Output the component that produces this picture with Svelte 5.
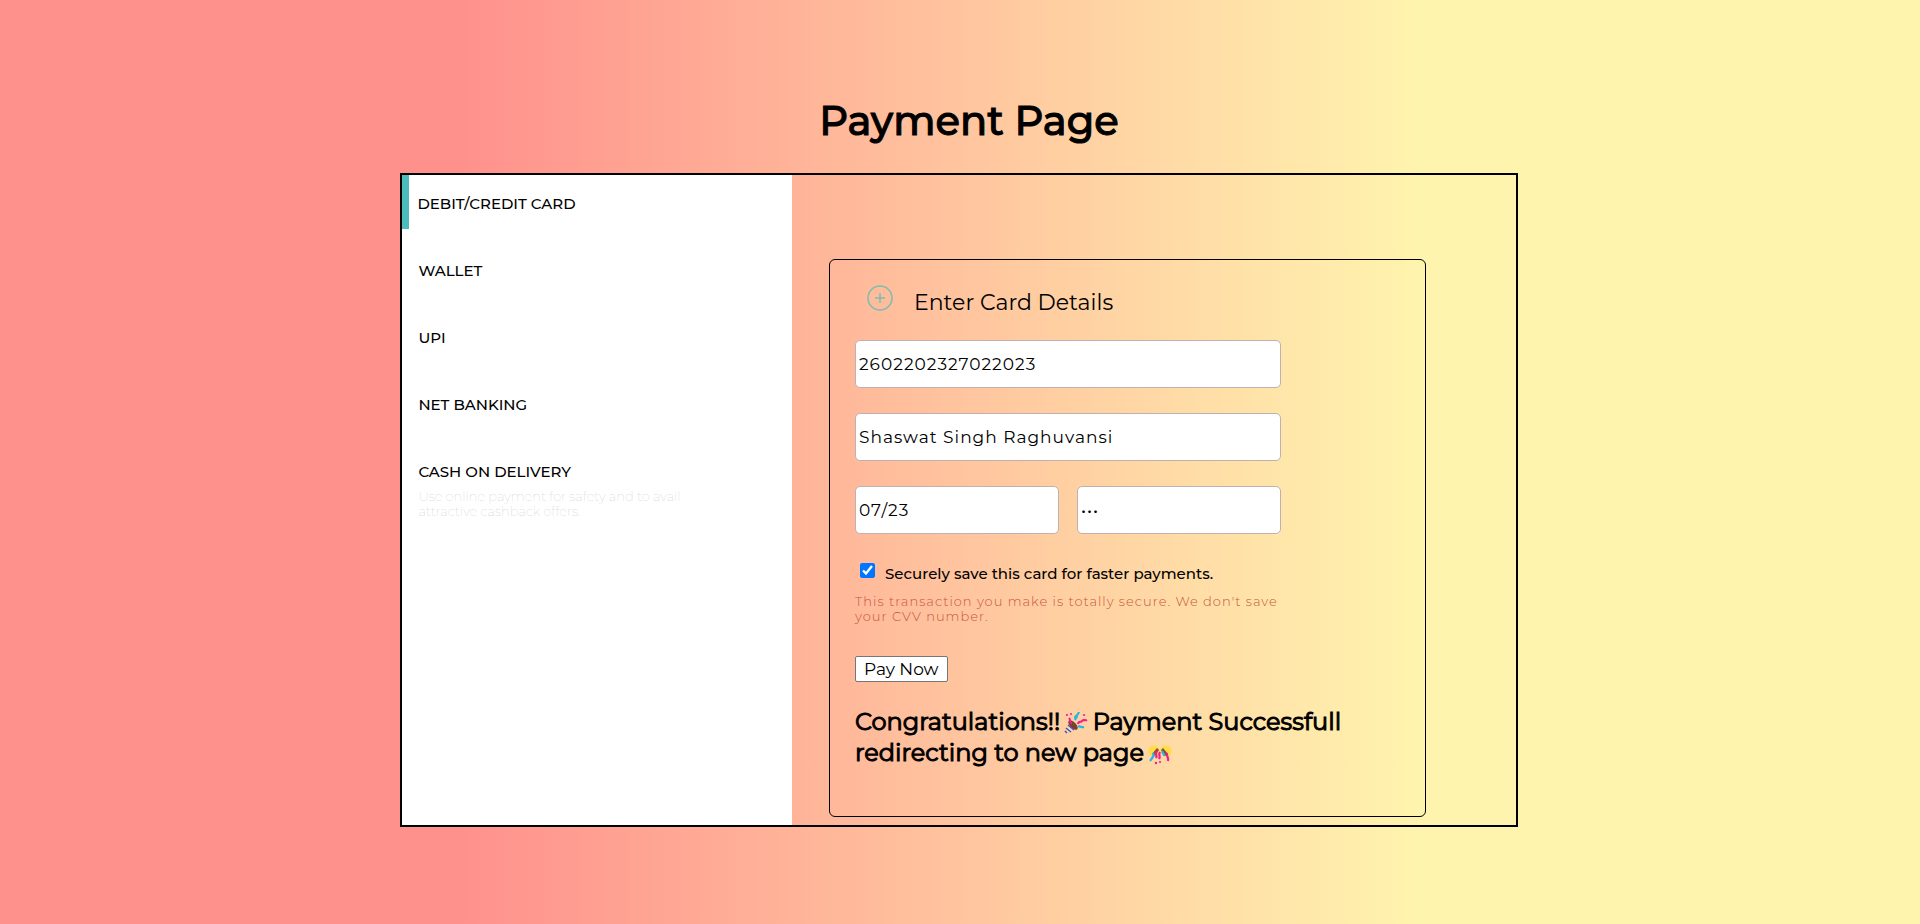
<script>
  const methods = ['Debit/Credit Card', 'Wallet', 'UPI', 'Net Banking', 'Cash on Delivery'];
  let selected = $state(0);
  let cardNumber = $state('2602202327022023');
  let holder = $state('Shaswat Singh Raghuvansi');
  let expiry = $state('07/23');
  let cvv = $state('123');
  let save = $state(true);
</script>

<main class="page">
  <h1>Payment Page</h1>

  <div class="shell">
    <nav class="methods" aria-label="Payment methods">
      {#each methods as method, i}
        <button type="button" class="method" class:active={selected === i} onclick={() => (selected = i)}>
          {method}
        </button>
      {/each}
      <p class="hint">Use online payment for safety and to avail attractive cashback offers.</p>
    </nav>

    <section class="content">
      <form class="card" onsubmit={(e) => e.preventDefault()}>
        <header class="card-head">
          <svg class="plus" viewBox="0 0 26 26" fill="none" stroke="#7dbcb0" aria-hidden="true">
            <circle cx="13" cy="13" r="12" stroke-width="1.5" />
            <path d="M13 8v10M8 13h10" stroke-width="1.5" />
          </svg>
          <h2>Enter Card Details</h2>
        </header>

        <div class="fields">
          <input type="text" aria-label="Card number" bind:value={cardNumber} />
          <input type="text" aria-label="Name on card" bind:value={holder} />
          <div class="pair">
            <input type="text" aria-label="Expiry date" bind:value={expiry} />
            <input type="password" aria-label="CVV" bind:value={cvv} />
          </div>
        </div>

        <div class="save">
          <input id="save-card" type="checkbox" bind:checked={save} />
          <label for="save-card">Securely save this card for faster payments.</label>
        </div>
        <p class="secure">This transaction you make is totally secure. We don't save your CVV number.</p>

        <button type="submit" class="pay">Pay Now</button>

        <p class="success">
          Congratulations!!
          <svg class="emoji" viewBox="0 0 24 24" fill="none" aria-hidden="true">
            <path d="M6 12 11 18 2 22Z" fill="#f4dfc4" />
            <path d="M4 14l6 5M2 17l5 4M1 20l2 2" stroke="#4b55b8" stroke-width="1.6" />
            <ellipse cx="9" cy="14" rx="3" ry="6" transform="rotate(-45 9 14)" fill="#77432f" />
            <path d="M8 13C5 11 7 9 5 7" stroke="#f51b8c" stroke-width="2" />
            <path d="M12 9c-3-3 2-4 3-8M14 16c2-2 3 1 6 0" stroke="#25b5e6" stroke-width="2.2" />
            <path d="M14 13c1-4 3-1 4-3s3 0 5-1" stroke="#f51b8c" stroke-width="2.2" />
            <circle cx="12" cy="6" r="1.8" fill="#25b5e6" />
            <g fill="#f51b8c"><circle cx="3" cy="4" r="1.1" /><circle cx="7" cy="3" r="1" /><circle cx="20" cy="4" r="1.1" /></g>
          </svg>
          Payment Successfull redirecting to new page
          <svg class="emoji" viewBox="0 0 24 24" fill="none" aria-hidden="true">
            <circle cx="6" cy="9" r="5.5" fill="#ffdc45" />
            <circle cx="18" cy="9" r="5.5" fill="#ffdc45" />
            <path d="M4 12 9 6l2 2-4 6ZM20 12l-5-6-2 2 4 6Z" fill="#87502f" />
            <path d="M5 11c2 2 0 4-3 8M15 9c-2 2 2 2 1 5" stroke="#25b5e6" stroke-width="2.2" />
            <path d="M9 9c-3 3 1 4-1 7M12 10c-2 3 1 4-1 7M19 11c-1 3 2 4 1 8" stroke="#f51b8c" stroke-width="2.2" />
            <g fill="#f51b8c"><circle cx="8" cy="21" r="1.2" /><circle cx="12" cy="20" r="1.1" /></g>
          </svg>
        </p>
      </form>
    </section>
  </div>
</main>

<style>
  :global(body) {
    margin: 0;
  }

  .page {
    box-sizing: border-box;
    min-height: 100vh;
    padding: 96px 2px 96px 0;
    background: linear-gradient(90deg, #ff918d 24%, #fff4ae 74%);
    color: #000;
    font-family: Montserrat, Inter, sans-serif;
    font-size: 17px;
  }

  h1,
  h2,
  p {
    margin: 0;
  }

  h1 {
    padding-left: 20px;
    margin-bottom: 27px;
    font-size: 40px;
    font-weight: 500;
    line-height: 50px;
    text-align: center;
    -webkit-text-stroke: 1px #000;
  }

  .shell {
    display: flex;
    box-sizing: border-box;
    width: 58.25%;
    margin: 0 auto;
    border: 2px solid #000;
  }

  .methods {
    flex: 0 0 35%;
    display: flex;
    flex-direction: column;
    background: #fff;
  }

  .method {
    box-sizing: border-box;
    height: 54px;
    margin: 0 0 13px;
    padding: 2px 0 0 9px;
    border: 0;
    border-left: 7px solid transparent;
    background: none;
    color: #000;
    font: inherit;
    font-size: 15px;
    font-weight: 500;
    text-align: left;
    text-transform: uppercase;
    cursor: pointer;
  }

  .method.active {
    padding-left: 8px;
    border-color: #4cbcbc;
  }

  .hint {
    width: 280px;
    margin-top: -21px;
    padding-left: 16px;
    color: #c8c8c8;
    font-size: 13px;
    font-weight: 100;
    line-height: 15px;
  }

  .content {
    flex: 1;
    padding: 84px 90px 8px 37px;
  }

  .card {
    box-sizing: border-box;
    padding: 25px 24px 48px 25px;
    border: 1px solid #000;
    border-radius: 6px;
  }

  .card-head {
    display: flex;
    align-items: flex-start;
    gap: 21px;
    padding-left: 12px;
    margin-bottom: 23px;
  }

  .plus {
    width: 26px;
    height: 26px;
  }

  h2 {
    padding-top: 4px;
    font-size: 22px;
    font-weight: 400;
    line-height: 28px;
  }

  .fields {
    display: grid;
    gap: 25px;
    max-width: 426px;
  }

  .fields input {
    box-sizing: border-box;
    width: 100%;
    min-width: 0;
    height: 48px;
    padding: 0 3px;
    border: 1px solid #c0b0b0;
    border-radius: 5px;
    background: #fff;
    color: #000;
    font: inherit;
    letter-spacing: 1px;
  }

  .pair {
    display: grid;
    grid-template-columns: 1fr 1fr;
    gap: 18px;
  }

  .save {
    display: flex;
    align-items: flex-start;
    gap: 10px;
    padding-left: 5px;
    margin-top: 29px;
  }

  .save input {
    width: 15px;
    height: 15px;
    margin: 0;
  }

  .save label {
    padding-top: 1px;
    font-size: 15px;
    font-weight: 500;
    line-height: 20px;
  }

  .secure {
    max-width: 426px;
    margin-top: 10px;
    color: #c8553c;
    font-size: 13px;
    font-weight: 300;
    line-height: 15px;
    letter-spacing: 1px;
  }

  .pay {
    box-sizing: border-box;
    height: 26px;
    margin-top: 32px;
    padding: 0 8px;
    border: 1px solid #767676;
    border-radius: 2px;
    background: #fff;
    color: #000;
    font: inherit;
    line-height: 24px;
  }

  .success {
    margin-top: 24px;
    font-size: 24px;
    font-weight: 400;
    line-height: 31px;
    -webkit-text-stroke: 1px #000;
  }

  .emoji {
    width: 24px;
    height: 24px;
    margin: 0 -2px;
    vertical-align: -5px;
  }
</style>
